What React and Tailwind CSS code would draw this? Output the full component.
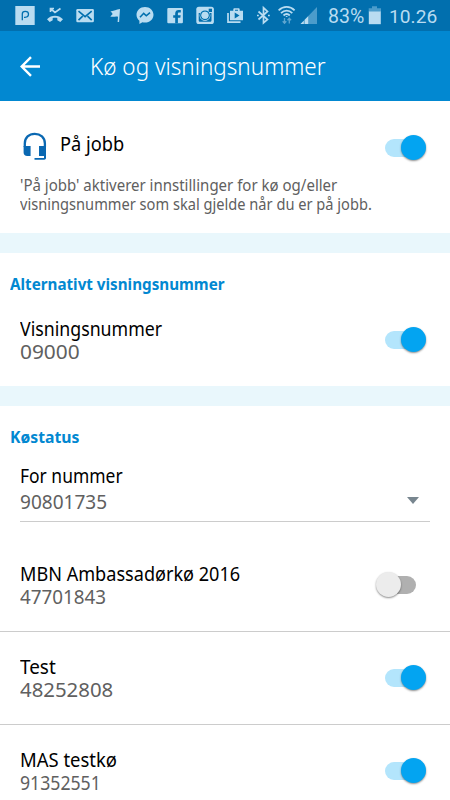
import React from 'react';

function StatusIcon({ x, w, children }) {
  return (
    <svg width={w} height="31" viewBox={`${x} 0 ${w} 31`} className="shrink-0" fill="#b9dcf1">
      {children}
    </svg>
  );
}

function StatusBar() {
  return (
    <div className="flex h-[31px] items-start bg-[#016fae] pl-[15px] font-[Roboto] text-[#b9dcf1] shadow-[0_1px_0_#0580c3]">
      <StatusIcon x={15} w={32}>
        <path d="M15.300 6h19.400v19H15.300z" />
        <path d="M22.300 20.200V14c0-1.600 1-2.600 2.900-2.600 2.200 0 3.300 1 3.300 2.700 0 2-1.300 3.200-3.500 3.200h-1" fill="none" stroke="#016fae" strokeWidth="1.300" />
      </StatusIcon>
      <StatusIcon x={47} w={29}>
        <path d="M50.500 8.500l4.500 4 5.500-4M50.500 12V8.500h3.500" fill="none" stroke="#b9dcf1" strokeWidth="1.700" />
        <path d="M47 19.200c4.600-4.600 11.400-4.600 16 0l-2.700 2.800-3-1.700v-2.200c-1.600-.5-3-.5-4.600 0v2.200l-3 1.700z" />
      </StatusIcon>
      <StatusIcon x={76} w={34}>
        <rect x="76.300" y="9" width="17.600" height="13.200" rx="1.300" />
        <path d="M78.500 11.200l6.600 5.400 6.600-5.400M78.500 20.200l4.200-4M91.700 20.200l-4.200-4" fill="none" stroke="#016fae" strokeWidth="1.600" />
      </StatusIcon>
      <StatusIcon x={110} w={26}>
        <path d="M120 9l-.9 13h-1.500l.4-5.200c-2.700-.9-4.500.8-7.700-.4l2.400-2.400-2.200-2.900c3.200.6 5-1.900 9.500-2.100z" />
      </StatusIcon>
      <StatusIcon x={136} w={31}>
        <path d="M145 7c-4.900 0-8.500 3.400-8.500 7.800 0 2.400 1.100 4.500 2.900 5.900v3.300l3-1.700c.8.200 1.700.3 2.600.3 4.900 0 8.500-3.400 8.500-7.800S149.900 7 145 7z" />
        <path d="M140 17.200l3.700-3.900 2.600 2.500 3.700-3.100" fill="none" stroke="#016fae" strokeWidth="1.600" />
      </StatusIcon>
      <StatusIcon x={167} w={29}>
        <rect x="167.300" y="8" width="15.600" height="15.200" rx="1" />
        <path d="M175.200 23.200v-5.400h-2v-2.600h2V13.500c0-2.400 1.400-3.500 3.400-3.500h2.200v2.600h-1.600c-1 0-1.300.4-1.300 1.200v1.400h2.800l-.4 2.600h-2.400v5.400z" fill="#016fae" />
      </StatusIcon>
      <StatusIcon x={196} w={31}>
        <rect x="196.300" y="6.700" width="17.600" height="17.300" rx="2.600" />
        <path d="M198.700 13h2a4.900 4.900 0 1 0 8.800 0h2v7.200c0 1-.6 1.600-1.600 1.600h-9.600c-1 0-1.600-.6-1.600-1.600z" fill="#016fae" />
        <circle cx="205" cy="15.500" r="4.500" fill="none" stroke="#b9dcf1" strokeWidth="1.800" />
        <circle cx="205" cy="15.300" r="4.200" fill="none" stroke="#016fae" strokeWidth="1.400" />
        <circle cx="205" cy="15.300" r="3.500" />
        <rect x="208.700" y="8.700" width="3.300" height="3.300" fill="#016fae" />
      </StatusIcon>
      <StatusIcon x={227} w={29}>
        <path d="M230 10.800h3.300V9.500c0-.8.500-1.300 1.300-1.300h3.800c.8 0 1.300.5 1.300 1.300v1.300h3.300v9.400h-13zM235 10.800h3V9.800h-3z" fillRule="evenodd" />
        <path d="M234.700 12.400v6l4.800-3z" fill="#016fae" />
        <path d="M228 13v9.100h12.500" fill="none" stroke="#b9dcf1" strokeWidth="1.700" />
      </StatusIcon>
      <StatusIcon x={256} w={22}>
        <path d="M258.500 11.500l9 8-4 3.500V7.800l4 3.700-9 8M257 15.500h1.800M268 15.500h1.800" fill="none" stroke="#b9dcf1" strokeWidth="1.700" />
      </StatusIcon>
      <StatusIcon x={278} w={22}>
        <path d="M278.600 10.400c4.800-4.600 11.400-4.600 16 0M281 13.100c3.400-3.300 8-3.300 11.300 0M283.500 15.500c2-1.900 4.400-1.900 6.300 0" fill="none" stroke="#b9dcf1" strokeWidth="1.800" />
        <path d="M286.700 15.800l1.200 1.300h-2.500z" />
        <path d="M284.500 18v5m-1.800-1.700l1.800 2 1.800-2M289.300 23.500v-5m-1.800 1.700l1.800-2 1.800 2" fill="none" stroke="#5fa6d0" strokeWidth="1.300" />
      </StatusIcon>
      <StatusIcon x={300} w={28}>
        <path d="M300.500 24L317 7v17z" fill="#4b9ccb" />
        <path d="M300.500 24l3.300-3.300V24zM304.700 24v-4.200l3.500-3.600V24z" />
      </StatusIcon>
      <span className="w-[40px] text-[19.500px] leading-[33px]">83%</span>
      <StatusIcon x={368} w={21}>
        <path d="M372 6.300h5v2h4v3.600h-12.300V8.300h3.300z" fill="#4b9ccb" />
        <path d="M368.800 11.500h12v12.700h-12z" />
      </StatusIcon>
      <span className="text-[19.200px] leading-[33px]">10.26</span>
    </div>
  );
}

function Toggle({ on = false }) {
  return on ? (
    <div className="relative h-[18px] w-[41px] shrink-0 rounded-full" role="switch" aria-checked="true">
      <div className="h-[18px] w-[36px] rounded-full bg-[#b3e5fc]" />
      <div className="absolute -top-[4px] right-0 h-[25px] w-[25px] rounded-full bg-[#03a4f1] shadow-[0_1px_2px_rgba(0,0,0,0.450)]" />
    </div>
  ) : (
    <div className="relative mr-[10px] flex h-[18px] w-[40px] shrink-0 justify-end" role="switch" aria-checked="false">
      <div className="h-[18px] w-[34px] rounded-full bg-[#b0b0b0]" />
      <div className="absolute -top-[4px] left-0 h-[25px] w-[25px] rounded-full bg-[#ececec] shadow-[0_1px_2px_rgba(0,0,0,0.450)]" />
    </div>
  );
}

function SettingRow({ name, number, nameClass, numberClass, on }) {
  return (
    <div className="flex items-center justify-between pr-[24px] pl-[20px]">
      <div className="text-[19.500px] leading-[23px] whitespace-nowrap">
        <div className={`origin-left text-black ${nameClass}`}>{name}</div>
        <div className={`origin-left text-[#606060] ${numberClass}`}>{number}</div>
      </div>
      <Toggle on={on} />
    </div>
  );
}

const queues = [
  { name: 'MBN Ambassadørkø 2016', number: '47701843', nameClass: 'scale-x-[0.928]', numberClass: 'scale-x-[0.965]', on: false },
  { name: 'Test', number: '48252808', nameClass: 'scale-x-[0.970]', numberClass: 'scale-x-[1.045]', on: true },
  { name: 'MAS testkø', number: '91352551', nameClass: 'scale-x-[0.945]', numberClass: 'scale-x-[0.905]', on: true },
];

export default function App() {
  return (
    <div className="h-[800px] w-[450px] overflow-hidden bg-white font-['Noto_Sans',sans-serif]">
      <StatusBar />
      <header className="flex h-[70px] items-center bg-[#0288d1] pl-[20px] text-white">
        <svg width="21" height="21" viewBox="0 0 21 21" fill="none" stroke="white" strokeWidth="2.400">
          <path d="M20 10.500H2M11 1.200L1.700 10.500l9.300 9.300" />
        </svg>
        <h1 className="ml-[49px] origin-left scale-x-[0.937] text-[24px] font-light">Kø og visningsnummer</h1>
      </header>

      <section className="h-[132px] pt-[28px]">
        <div className="flex h-[38px] items-center pr-[24px] pl-[23px]">
          <svg width="24" height="29" viewBox="0 0 24 29" fill="#0a68b2" className="-mt-1">
            <path d="M1.800 15v-3.500C1.800 5.500 6 1.800 11.700 1.800s10.200 3.700 10.200 9.700V15" fill="none" stroke="#0a68b2" strokeWidth="2.300" />
            <path d="M.6 14h7v10H4.200C2 24 .6 22.500.6 20.400zM16 14h7v12c0 1-.8 1.700-1.800 1.700H11.500v-1.800H21V24h-5z" />
          </svg>
          <div className="grow pb-2 pl-[13px] text-[19.500px] text-black">
            <div className="w-fit origin-left scale-x-[0.935]">På jobb</div>
          </div>
          <Toggle on />
        </div>
        <p className="mt-[9px] pl-[20px] text-[16px] leading-[19px] whitespace-nowrap text-[#606060]">
          <span className="block w-fit origin-left scale-x-[0.938]">'På jobb' aktiverer innstillinger for kø og/eller</span>
          <span className="block w-fit origin-left scale-x-[0.914]">visningsnummer som skal gjelde når du er på jobb.</span>
        </p>
      </section>

      <div className="h-5 bg-[#e9f7fc]" />

      <section className="h-[133px] pt-[20px]">
        <h2 className="ml-[10px] origin-left scale-x-[0.950] text-[16px] leading-[22px] font-bold text-[#0288d1]">
          Alternativt visningsnummer
        </h2>
        <div className="mt-[22px]">
          <SettingRow name="Visningsnummer" number="09000" nameClass="scale-x-[0.910]" numberClass="scale-x-[1.070]" on />
        </div>
      </section>

      <div className="h-5 bg-[#e9f7fc]" />

      <section className="pt-[20px]">
        <h2 className="ml-[10px] origin-left scale-x-[0.985] text-[16px] leading-[22px] font-bold text-[#0288d1]">Køstatus</h2>
        <div className="mx-[20px] mt-[15px] flex h-[59px] items-end justify-between border-b border-[#cccccc] pb-[6px]">
          <div className="text-[19.500px] leading-[26px]">
            <div className="origin-left scale-x-[0.895] text-black">For nummer</div>
            <div className="origin-left scale-x-[0.975] text-[#606060]">90801735</div>
          </div>
          <svg width="12" height="7" viewBox="0 0 12 7" fill="#78868f" className="mr-[11px] mb-[11px]">
            <path d="M0 0h12L6 7z" />
          </svg>
        </div>
        <div className="pt-[17px]">
          {queues.map((queue) => (
            <div key={queue.number} className="flex h-[93px] flex-col justify-center border-b border-[#cccccc]">
              <SettingRow {...queue} />
            </div>
          ))}
        </div>
      </section>
    </div>
  );
}
